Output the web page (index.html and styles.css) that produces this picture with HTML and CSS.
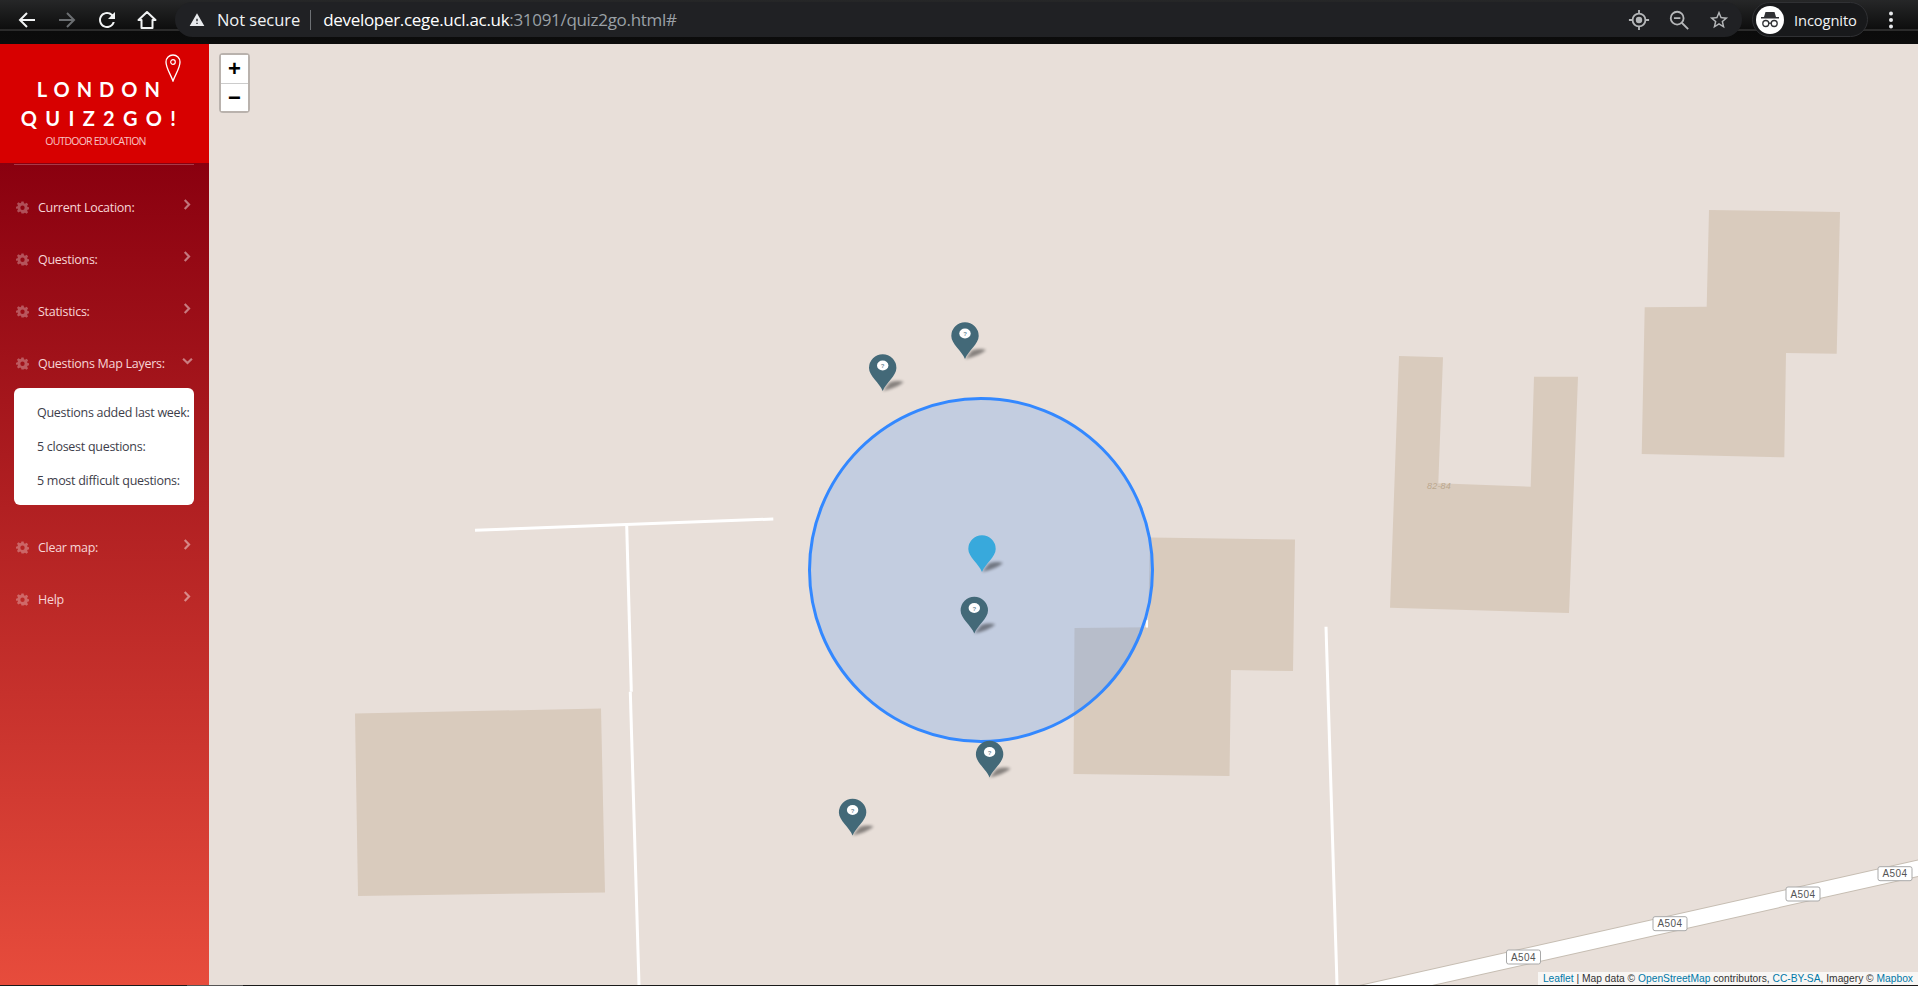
FILE: index.html
```html
<!DOCTYPE html>
<html lang="en">
<head>
<meta charset="utf-8">
<title>London Quiz2Go!</title>
<link rel="stylesheet" href="styles.css">
</head>
<body>
<svg class="sprites" width="0" height="0" aria-hidden="true">
  <symbol id="gear" viewBox="0 0 24 24"><path fill-rule="evenodd" d="M10 1h4l.7 3.3 1.9.8L19.5 3.300l2.800 2.800-1.800 2.900.8 1.900L24 11.600v3.800l-2.700.7-.8 1.900 1.800 2.900-2.800 2.800-2.900-1.800-1.900.8L14 23h-4l-.6-2.700-1.900-.8-2.900 1.800-2.800-2.800 1.800-2.900-.8-1.900L0 14.400v-3.800l2.800-.7.800-1.900-1.800-2.900 2.800-2.800 2.900 1.800 1.900-.8zM12 8.500a4 4 0 1 0 0 8 4 4 0 0 0 0-8z"/></symbol>
  <symbol id="chev" viewBox="0 0 8 12"><path d="M1.500 1.200 6.200 6l-4.700 4.800" fill="none" stroke="currentColor" stroke-width="2.400"/></symbol>
  <symbol id="chev-down" viewBox="0 0 12 8"><path d="M1.200 1.500 6 6.200l4.800-4.700" fill="none" stroke="currentColor" stroke-width="2.400"/></symbol>
</svg>

<header class="toolbar">
  <div class="navs">
    <svg class="tb-icon" viewBox="0 0 24 24"><path d="M20 12H5M12 5l-7 7 7 7" fill="none" stroke="#f1f3f4" stroke-width="2"/></svg>
    <svg class="tb-icon" viewBox="0 0 24 24"><path d="M4 12h15M12 5l7 7-7 7" fill="none" stroke="#6b6e71" stroke-width="2"/></svg>
    <svg class="tb-icon" viewBox="0 0 24 24"><path fill="#f1f3f4" d="M17.650 6.350A7.958 7.958 0 0 0 12 4c-4.420 0-7.990 3.580-7.990 8s3.570 8 7.990 8c3.730 0 6.840-2.550 7.730-6h-2.080A5.990 5.990 0 0 1 12 18c-3.310 0-6-2.690-6-6s2.690-6 6-6c1.660 0 3.140.690 4.220 1.780L13 11h7V4l-2.350 2.350z"/></svg>
    <svg class="tb-icon" viewBox="0 0 24 24"><path d="M12 4 3.500 12H6.500v8h11v-8h3z" fill="none" stroke="#f1f3f4" stroke-width="2" stroke-linejoin="round"/></svg>
  </div>
  <div class="omnibox">
    <svg class="warn" viewBox="0 0 24 24"><path fill="#e8eaed" d="M1 21h22L12 2 1 21zm12-3h-2v-2h2v2zm0-4h-2v-4h2v4z"/></svg>
    <span class="secure">Not secure</span>
    <span class="sep"></span>
    <span class="url"><span class="host">developer.cege.ucl.ac.uk</span>:31091/quiz2go.html#</span>
    <span class="omni-actions">
      <svg class="tb-icon small" viewBox="0 0 24 24"><g fill="none" stroke="#b5b7b9" stroke-width="2"><circle cx="12" cy="12" r="7"/><path d="M12 1v4M12 19v4M1 12h4M19 12h4"/></g><circle cx="12" cy="12" r="3.500" fill="#b5b7b9"/></svg>
      <svg class="tb-icon small" viewBox="0 0 24 24"><g fill="none" stroke="#b5b7b9" stroke-width="2"><circle cx="10" cy="10" r="7"/><path d="M15 15l7 7M6.500 10h7"/></g></svg>
      <svg class="tb-icon small" viewBox="0 0 24 24"><path fill="#b5b7b9" d="M22 9.240l-7.190-.620L12 2 9.190 8.630 2 9.240l5.460 4.730L5.820 21 12 17.270 18.180 21l-1.630-7.030L22 9.240zM12 15.400l-3.760 2.270 1-4.280-3.320-2.880 4.380-.380L12 6.100l1.710 4.040 4.380.380-3.320 2.880 1 4.280L12 15.400z"/></svg>
    </span>
  </div>
  <div class="profile">
    <svg class="avatar" viewBox="0 0 28 28"><circle cx="14" cy="14" r="14" fill="#fff"/><path fill="#303134" d="M9.500 6h9l1.500 5h3v1.500H5V11h3z"/><g fill="none" stroke="#303134" stroke-width="1.300"><circle cx="9.800" cy="17.500" r="3"/><circle cx="18.200" cy="17.500" r="3"/><path d="M12.800 17.200h2.400"/></g></svg>
    <span class="profile-name">Incognito</span>
  </div>
  <svg class="kebab" viewBox="0 0 6 20"><circle cx="3" cy="3.500" r="2" fill="#e8eaed"/><circle cx="3" cy="10" r="2" fill="#e8eaed"/><circle cx="3" cy="16.500" r="2" fill="#e8eaed"/></svg>
</header>

<div class="app">
  <aside class="sidebar">
    <div class="brand">
      <svg class="brand-pin" viewBox="0 0 16 28"><path d="M8 27C5.500 20 1 14 1 8a7 7 0 0 1 14 0c0 6-4.500 12-7 19z" fill="none" stroke="#fff" stroke-width="1.300"/><circle cx="8" cy="8" r="2.300" fill="none" stroke="#fff" stroke-width="1.200"/></svg>
      <div class="brand-title">LONDON</div>
      <div class="brand-title second">QUIZ2GO!</div>
      <div class="brand-sub">OUTDOOR EDUCATION</div>
    </div>
    <hr class="rule">
    <nav class="menu">
      <a class="item"><svg class="gear"><use href="#gear"/></svg><span class="label">Current Location:</span><svg class="chev"><use href="#chev"/></svg></a>
      <a class="item"><svg class="gear"><use href="#gear"/></svg><span class="label">Questions:</span><svg class="chev"><use href="#chev"/></svg></a>
      <a class="item"><svg class="gear"><use href="#gear"/></svg><span class="label">Statistics:</span><svg class="chev"><use href="#chev"/></svg></a>
      <a class="item"><svg class="gear"><use href="#gear"/></svg><span class="label">Questions Map Layers:</span><svg class="chev down"><use href="#chev-down"/></svg></a>
      <div class="panel">
        <a class="panel-item">Questions added last week:</a>
        <a class="panel-item">5 closest questions:</a>
        <a class="panel-item">5 most difficult questions:</a>
      </div>
      <a class="item"><svg class="gear"><use href="#gear"/></svg><span class="label">Clear map:</span><svg class="chev"><use href="#chev"/></svg></a>
      <a class="item"><svg class="gear"><use href="#gear"/></svg><span class="label">Help</span><svg class="chev"><use href="#chev"/></svg></a>
    </nav>
  </aside>

  <main class="map">
    <svg class="map-canvas" viewBox="209 44 1709 941" preserveAspectRatio="none">
      <defs>
        <filter id="soft" x="-30%" y="-60%" width="160%" height="220%"><feGaussianBlur stdDeviation="1.500"/></filter>
        <path id="pin-body" d="M0 0C-3-8-13.700-15-13.700-23A13.700 13.700 0 1 1 13.700-23C13.700-15 3-8 0 0Z"/>
        <path id="pin-shadow" d="M0 0 7-8.500Q15-11 21-9 14-3 0 0Z" fill="#000" opacity=".42" filter="url(#soft)"/>
      </defs>

      <g class="bldg">
        <polygon points="355,713.500 601,708.500 605,892.500 358,896"/>
        <polygon points="1150,537.500 1295,539.500 1293,671 1231,670 1229.500,776 1073.500,774 1074.500,628 1148,627.300"/>
        <polygon points="1399,356 1443,357.300 1438.300,483.300 1530.700,486.700 1534,376.700 1578,376.700 1569,613 1390,607.700"/>
        <polygon points="1709,210 1840,212 1836.700,353.700 1786,353 1784.300,457.300 1641.700,454 1644.700,307.300 1706.700,306.700"/>
      </g>
      <text class="addr" x="1427" y="489">82-84</text>

      <g class="lane">
        <path d="M475 530.300 773.300 519"/>
        <path d="M626.700 525.700 631.300 691.700"/>
        <path d="M630.300 691.700 639 985"/>
        <path d="M1326 626.700 1337 985"/>
        <path class="stub" d="M1147 620v7.500"/>
      </g>

      <path class="road-case" d="M1300 1007 1930 865.500"/>
      <path class="road-fill" d="M1300 1007 1930 865.500"/>
      <g class="shield">
        <g transform="translate(1523.500 957)"><rect x="-17" y="-7" width="34" height="14" rx="2"/><text y="3.600">A504</text></g>
        <g transform="translate(1670 923.700)"><rect x="-17" y="-7" width="34" height="14" rx="2"/><text y="3.600">A504</text></g>
        <g transform="translate(1803 894)"><rect x="-17" y="-7" width="34" height="14" rx="2"/><text y="3.600">A504</text></g>
        <g transform="translate(1895 873.700)"><rect x="-17" y="-7" width="34" height="14" rx="2"/><text y="3.600">A504</text></g>
      </g>

      <circle class="radius" cx="981" cy="570" r="171.500"/>

      <g class="marker" transform="translate(882.700 391)"><use href="#pin-shadow"/><use href="#pin-body"/><ellipse cx="0" cy="-25.500" rx="5.700" ry="5"/><text y="-23">?</text></g>
      <g class="marker" transform="translate(965 359)"><use href="#pin-shadow"/><use href="#pin-body"/><ellipse cx="0" cy="-25.500" rx="5.700" ry="5"/><text y="-23">?</text></g>
      <g class="marker blue" transform="translate(982 572)"><use href="#pin-shadow"/><use href="#pin-body"/></g>
      <g class="marker" transform="translate(974.300 633.500)"><use href="#pin-shadow"/><use href="#pin-body"/><ellipse cx="0" cy="-25.500" rx="5.700" ry="5"/><text y="-23">?</text></g>
      <g class="marker" transform="translate(989.600 777.500)"><use href="#pin-shadow"/><use href="#pin-body"/><ellipse cx="0" cy="-25.500" rx="5.700" ry="5"/><text y="-23">?</text></g>
      <g class="marker" transform="translate(852.600 835.500)"><use href="#pin-shadow"/><use href="#pin-body"/><ellipse cx="0" cy="-25.500" rx="5.700" ry="5"/><text y="-23">?</text></g>
    </svg>

    <div class="zoom-ctl">
      <a class="zoom-btn">+</a>
      <a class="zoom-btn">−</a>
    </div>
    <div class="attribution"><a>Leaflet</a> | Map data © <a>OpenStreetMap</a> contributors, <a>CC-BY-SA</a>, Imagery © <a>Mapbox</a></div>
  </main>
</div>
<div class="taskbar-edge"></div>
</body>
</html>
```
FILE: styles.css
```css
* { box-sizing: border-box; }
html, body { height: 100%; }
body {
  margin: 0;
  display: flex;
  flex-direction: column;
  overflow: hidden;
  background: #1a1a1a;
  font-family: "Open Sans", "Noto Sans", sans-serif;
}
.sprites { position: absolute; }

/* browser chrome */
.toolbar {
  flex: 0 0 44px;
  display: flex;
  align-items: flex-start;
  padding: 2px 24px 0 0;
  background: linear-gradient(#262728 0, #0e0e0e 29px, #2b2b2b 29.500px, #2b2b2b 30.500px, #0b0b0b 31px, #0c0c0c 100%);
  color: #fff;
}
.navs {
  flex: none;
  display: flex;
  gap: 16px;
  padding: 6px 0 0 15px;
  width: 175px;
}
.tb-icon { width: 24px; height: 24px; flex: none; }
.tb-icon.small { width: 22px; height: 22px; }
.omnibox {
  flex: 1;
  height: 35px;
  display: flex;
  align-items: center;
  padding-left: 14px;
  background: #202124;
  border-radius: 18px;
}
.warn { width: 16px; height: 16px; flex: none; }
.secure { margin-left: 12px; font-size: 16.500px; color: #f1f3f4; letter-spacing: -.05px; }
.sep { width: 1px; height: 20px; margin: 0 12px 0 10px; background: #6e7175; }
.url { font-size: 17px; color: #9aa0a6; letter-spacing: -.31px; }
.host { color: #fff; }
.omni-actions { margin-left: auto; display: flex; gap: 18px; padding-right: 12px; }
.profile {
  flex: none;
  width: 116px;
  height: 35px;
  margin-left: 10px;
  display: flex;
  align-items: center;
  gap: 10px;
  padding-left: 3px;
  background: #18191b;
  border: 1px solid #303134;
  border-radius: 18px;
}
.avatar { width: 28px; height: 28px; flex: none; }
.profile-name { font-size: 14.700px; color: #f1f3f4; letter-spacing: -.1px; }
.kebab { width: 6px; height: 20px; margin: 8px 0 0 20px; flex: none; }

/* app */
.app { flex: 1; display: flex; min-height: 0; }
.taskbar-edge {
  flex: 0 0 1px;
  background: linear-gradient(90deg, #1a1a1a 187px, #555 187px, #555 243px, #1a1a1a 243px);
}
.sidebar {
  flex: 0 0 209px;
  display: flex;
  flex-direction: column;
  background: linear-gradient(#8a000f 119px, #e74c3c 100%);
}
.brand {
  position: relative;
  height: 119px;
  padding-top: 30px;
  background: #d70000;
  color: #fff;
  text-align: center;
}
.brand-pin { position: absolute; top: 10px; left: 165px; width: 16px; height: 28px; }
.brand-title {
  font-family: "Lato", sans-serif;
  font-weight: 700;
  font-size: 20px;
  line-height: 30px;
  letter-spacing: 7px;
  padding-right: 5.500px;
}
.brand-title.second { margin-top: -1px; letter-spacing: 8.300px; padding-right: 4px; }
.brand-sub {
  margin-top: 1px;
  padding-right: 18px;
  font-size: 10.500px;
  line-height: 14px;
  color: #f7c4c4;
  font-weight: 400;
  letter-spacing: -.8px;
}
.rule { height: 1px; margin: 1px 15px 0 14px; border: 0; background: #a83a48; }
.menu { display: flex; flex-direction: column; padding-top: 16px; }
.item {
  height: 52px;
  display: flex;
  align-items: center;
  padding-left: 16px;
  color: #f7d5d6;
  font-size: 12.500px;
}
.gear { width: 13px; height: 13px; flex: none; fill: rgba(255, 255, 255, .3); }
.label { margin-left: 9px; flex: 1; white-space: nowrap; letter-spacing: -.28px; }
.chev { width: 8px; height: 11px; flex: none; margin: -5px 18px 0 0; color: rgba(255, 255, 255, .45); }
.chev.down { width: 11px; height: 8px; margin: -5px 16px 0 0; }
.panel {
  height: 117px;
  margin: -1px 15px 16px 14px;
  padding-top: 8px;
  background: #fff;
  border-radius: 6px;
}
.panel-item {
  display: block;
  height: 34px;
  line-height: 34px;
  padding-left: 23px;
  font-size: 12.500px;
  color: #3d3d4a;
  white-space: nowrap;
  letter-spacing: -.28px;
}

/* map */
.map { position: relative; flex: 1; min-width: 0; background: #e8dfd9; }
.map-canvas { display: block; width: 100%; height: 100%; }
.bldg polygon { fill: #d9cbbd; }
.addr { font: italic 9px "Liberation Sans", sans-serif; fill: #bba88f; letter-spacing: .2px; }
.lane path { fill: none; stroke: #fff; stroke-width: 3; }
.lane .stub { stroke-width: 2; }
.road-case { fill: none; stroke: #c6bdb2; stroke-width: 17; }
.road-fill { fill: none; stroke: #fff; stroke-width: 15; }
.shield rect { fill: #fff; stroke: #a9a9a9; stroke-width: 1; }
.shield text { font: 10px "Liberation Sans", sans-serif; fill: #555; text-anchor: middle; letter-spacing: .4px; }
.radius { fill: #3388ff; fill-opacity: .2; stroke: #3388ff; stroke-width: 3; }
.marker use[href="#pin-body"] { fill: #436978; }
.marker.blue use[href="#pin-body"] { fill: #38a9dc; }
.marker ellipse { fill: #fff; }
.marker text { font: bold 6px "Liberation Sans", sans-serif; fill: #6f8e9b; text-anchor: middle; }

.zoom-ctl {
  position: absolute;
  top: 9px;
  left: 10px;
  width: 31px;
  border: 2px solid rgba(0, 0, 0, .2);
  border-radius: 4px;
  background-clip: padding-box;
}
.zoom-btn {
  display: block;
  height: 28px;
  background: #fff;
  color: #000;
  font: bold 22px/28px "Liberation Sans", sans-serif;
  text-align: center;
}
.zoom-btn + .zoom-btn { border-top: 1px solid #ccc; }
.attribution {
  position: absolute;
  right: 0;
  bottom: 0;
  height: 13px;
  padding: 0 5px;
  background: rgba(255, 255, 255, .7);
  color: #333;
  font: 10.250px/13px "Liberation Sans", sans-serif;
  white-space: nowrap;
}
.attribution a { color: #0078a8; }
```
